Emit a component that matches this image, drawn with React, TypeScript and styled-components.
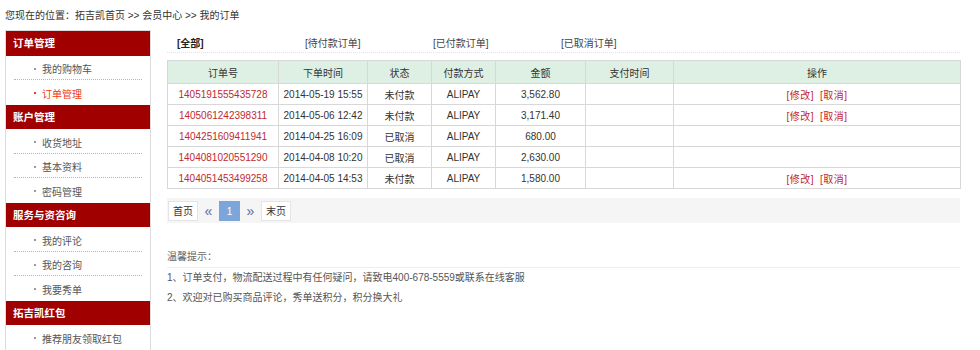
import React from 'react';
import styled, { createGlobalStyle } from 'styled-components';

const GlobalStyle = createGlobalStyle`
  html, body {
    margin: 0;
    padding: 0;
    background: #fff;
  }
  body {
    font-family: "Liberation Sans", "Noto Sans CJK SC", sans-serif;
    font-size: 10px;
    color: #333;
  }
`;

type MenuGroup = {
  title: string;
  items: { label: string; active?: boolean }[];
};

const menu: MenuGroup[] = [
  { title: '订单管理', items: [{ label: '我的购物车' }, { label: '订单管理', active: true }] },
  { title: '账户管理', items: [{ label: '收货地址' }, { label: '基本资料' }, { label: '密码管理' }] },
  { title: '服务与资咨询', items: [{ label: '我的评论' }, { label: '我的咨询' }, { label: '我要秀单' }] },
  { title: '拓吉凯红包', items: [{ label: '推荐朋友领取红包' }] },
];

type Order = {
  no: string;
  time: string;
  status: string;
  pay: string;
  amount: string;
  paidAt: string;
  editable: boolean;
};

const orders: Order[] = [
  { no: '1405191555435728', time: '2014-05-19 15:55', status: '未付款', pay: 'ALIPAY', amount: '3,562.80', paidAt: '', editable: true },
  { no: '1405061242398311', time: '2014-05-06 12:42', status: '未付款', pay: 'ALIPAY', amount: '3,171.40', paidAt: '', editable: true },
  { no: '1404251609411941', time: '2014-04-25 16:09', status: '已取消', pay: 'ALIPAY', amount: '680.00', paidAt: '', editable: false },
  { no: '1404081020551290', time: '2014-04-08 10:20', status: '已取消', pay: 'ALIPAY', amount: '2,630.00', paidAt: '', editable: false },
  { no: '1404051453499258', time: '2014-04-05 14:53', status: '未付款', pay: 'ALIPAY', amount: '1,580.00', paidAt: '', editable: true },
];

const tabs = ['[全部]', '[待付款订单]', '[已付款订单]', '[已取消订单]'];

const columns = [
  { title: '订单号', width: 111 },
  { title: '下单时间', width: 89 },
  { title: '状态', width: 64 },
  { title: '付款方式', width: 64 },
  { title: '金额', width: 90 },
  { title: '支付时间', width: 88 },
  { title: '操作', width: 287 },
];

const Page = styled.div`
  width: 980px;
  height: 350px;
  overflow: hidden;
  padding-left: 5px;
  box-sizing: border-box;
`;

const Breadcrumb = styled.div`
  height: 30px;
  line-height: 32px;
  font-size: 10px;
  color: #333;
`;

const Body = styled.div`
  display: flex;
  align-items: flex-start;
`;

const Sidebar = styled.div`
  width: 146px;
  box-sizing: border-box;
  border: 1px solid #dcdcdc;
  border-bottom: none;
  flex-shrink: 0;
`;

const GroupTitle = styled.div`
  height: 24.5px;
  line-height: 24.5px;
  background: #a00000;
  color: #fff;
  font-weight: bold;
  font-size: 10.5px;
  padding-left: 7px;
`;

const MenuList = styled.ul`
  list-style: none;
  margin: 0;
  padding: 0;
`;

const MenuItem = styled.li<{ $active?: boolean }>`
  position: relative;
  height: 24.5px;
  line-height: 21px;
  padding-top: 3.5px;
  margin: 0 8px;
  padding-left: 28px;
  box-sizing: border-box;
  color: ${(p) => (p.$active ? '#ee3a10' : '#555')};
  border-bottom: 1px dotted #b5b5b5;

  &:last-child {
    border-bottom: none;
  }

  &::before {
    content: '';
    position: absolute;
    left: 20px;
    top: 12px;
    width: 2px;
    height: 2px;
    background: ${(p) => (p.$active ? '#ee3a10' : '#999')};
  }
`;

const Main = styled.div`
  margin-left: 16px;
  width: 793px;
`;

const Tabs = styled.div`
  display: flex;
  padding: 5px 0 0 10px;
  height: 17px;
  line-height: 17px;
  border-bottom: 1px dotted #e2e2e2;
`;

const Tab = styled.span<{ $current?: boolean }>`
  width: 128px;
  font-weight: ${(p) => (p.$current ? 'bold' : 'normal')};
  color: ${(p) => (p.$current ? '#222' : '#444')};
`;

const Table = styled.table`
  margin-top: 7px;
  width: 793px;
  border-collapse: collapse;
  table-layout: fixed;
  border: 1px solid #d2d2d2;
`;

const HeadCell = styled.th`
  height: 22px;
  background: #def0e3;
  font-weight: normal;
  color: #333;
  border: 1px solid #d8d8d8;
  padding: 0;
  text-align: center;
`;

const Cell = styled.td<{ $tone?: 'red' }>`
  height: 20px;
  border: 1px solid #d8d8d8;
  padding: 0;
  text-align: center;
  color: ${(p) => (p.$tone === 'red' ? '#c12a2e' : '#333')};
`;

const OpLink = styled.a`
  color: #c2282c;
  text-decoration: none;
  margin: 0 3px;
  letter-spacing: 0.5px;
`;

const Pager = styled.div`
  margin-top: 9px;
  height: 25px;
  background: #f5f5f5;
  display: flex;
  align-items: center;
  padding-left: 1px;
`;

const PageButton = styled.span<{ $current?: boolean }>`
  height: 20px;
  line-height: 20px;
  box-sizing: border-box;
  padding: 0 ${(p) => (p.$current ? '0' : '4px')};
  width: ${(p) => (p.$current ? '21px' : 'auto')};
  text-align: center;
  background: ${(p) => (p.$current ? '#7ca6da' : '#fff')};
  color: ${(p) => (p.$current ? '#fff' : '#333')};
  border: 1px solid ${(p) => (p.$current ? '#7ca6da' : '#e4e4e4')};
`;

const PageArrow = styled.span`
  width: 21px;
  text-align: center;
  color: #4f6f9f;
  font-size: 14px;
  line-height: 20px;
`;

const Tips = styled.div`
  margin-top: 24px;
  color: #555;
`;

const TipsTitle = styled.div`
  line-height: 20px;
  color: #666;
  border-bottom: 1px solid #eeeeee;
`;

const TipLine = styled.p`
  margin: 0;
  line-height: 20px;
`;

export default function App() {
  return (
    <Page>
      <GlobalStyle />
      <Breadcrumb>您现在的位置：拓吉凯首页 &gt;&gt; 会员中心 &gt;&gt; 我的订单</Breadcrumb>
      <Body>
        <Sidebar>
          {menu.map((group) => (
            <div key={group.title}>
              <GroupTitle>{group.title}</GroupTitle>
              <MenuList>
                {group.items.map((item) => (
                  <MenuItem key={item.label} $active={item.active}>
                    {item.label}
                  </MenuItem>
                ))}
              </MenuList>
            </div>
          ))}
        </Sidebar>
        <Main>
          <Tabs>
            {tabs.map((t, i) => (
              <Tab key={t} $current={i === 0}>
                {t}
              </Tab>
            ))}
          </Tabs>
          <Table>
            <colgroup>
              {columns.map((c) => (
                <col key={c.title} style={{ width: c.width }} />
              ))}
            </colgroup>
            <thead>
              <tr>
                {columns.map((c) => (
                  <HeadCell key={c.title}>{c.title}</HeadCell>
                ))}
              </tr>
            </thead>
            <tbody>
              {orders.map((o) => (
                <tr key={o.no}>
                  <Cell $tone="red">{o.no}</Cell>
                  <Cell>{o.time}</Cell>
                  <Cell>{o.status}</Cell>
                  <Cell>{o.pay}</Cell>
                  <Cell>{o.amount}</Cell>
                  <Cell>{o.paidAt}</Cell>
                  <Cell>
                    {o.editable && (
                      <>
                        <OpLink href="#">[修改]</OpLink>
                        <OpLink href="#">[取消]</OpLink>
                      </>
                    )}
                  </Cell>
                </tr>
              ))}
            </tbody>
          </Table>
          <Pager>
            <PageButton>首页</PageButton>
            <PageArrow>«</PageArrow>
            <PageButton $current>1</PageButton>
            <PageArrow>»</PageArrow>
            <PageButton>末页</PageButton>
          </Pager>
          <Tips>
            <TipsTitle>温馨提示：</TipsTitle>
            <TipLine>1、订单支付，物流配送过程中有任何疑问，请致电400-678-5559或联系在线客服</TipLine>
            <TipLine>2、欢迎对已购买商品评论，秀单送积分，积分换大礼</TipLine>
          </Tips>
        </Main>
      </Body>
    </Page>
  );
}
